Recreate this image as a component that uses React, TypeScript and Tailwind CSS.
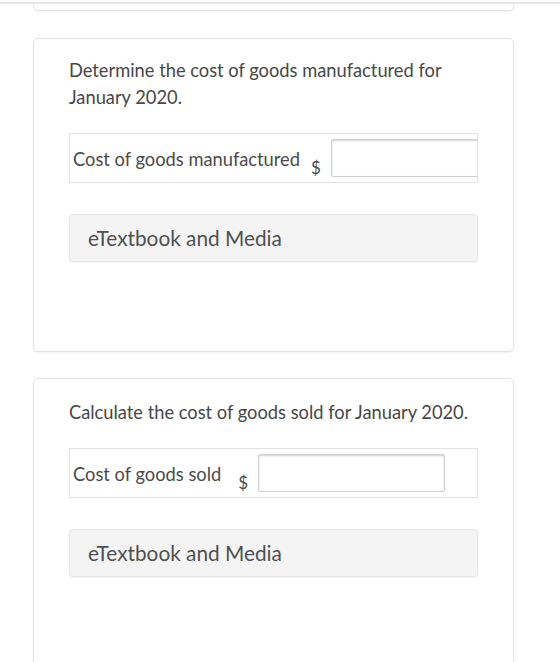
const font = { fontFamily: "Lato, 'Open Sans', sans-serif" };

type RowProps = {
  label: string;
  labelGap: string;
};

function AnswerRow({ label, labelGap }: RowProps) {
  return (
    <div className="flex h-[50px] items-start overflow-hidden border border-[#e2e2e2] bg-white">
      <span className="shrink-0 whitespace-nowrap pl-[3px] pt-[15px] text-[18.3px] leading-[20px] text-[#4a4a4a]">
        {label}
      </span>
      <span className={`${labelGap} shrink-0 pt-[24px] text-[17px] leading-[20px] text-[#4a4a4a]`}>$</span>
      <div className="ml-[10px] mt-[5px] h-[38px] w-[187px] shrink-0 rounded-[2px] border border-[#d0d0d0] bg-white shadow-[inset_0_1px_2px_rgba(0,0,0,0.18)]" />
    </div>
  );
}

function MediaButton() {
  return (
    <div className="flex h-[48px] items-center rounded-[4px] border border-[#e6e6e6] bg-[#f4f4f4] pl-[18px] text-[20.8px] text-[#505050] shadow-[0_1px_1px_rgba(0,0,0,0.05)]">
      eTextbook and Media
    </div>
  );
}

export default function App() {
  return (
    <div className="min-h-[662px] w-full bg-white pt-[2px]" style={font}>
      <div className="h-[2px] w-full bg-[#e6e6e6]" />
      <div className="ml-[33px] h-[7px] w-[481px] rounded-b-[5px] border-x border-b border-[#e2e2e2] shadow-[0_1px_2px_rgba(0,0,0,0.05)]" />

      <section className="ml-[33px] mt-[27px] h-[314px] w-[481px] rounded-[5px] border border-[#e2e2e2] px-[35px] pt-[18px] shadow-[0_1px_2px_rgba(0,0,0,0.06)]">
        <p className="text-[18.3px] leading-[27px] text-[#474747]">
          Determine the cost of goods manufactured for
          <br />
          January 2020.
        </p>
        <div className="mt-[22px]">
          <AnswerRow label="Cost of goods manufactured" labelGap="ml-[11px]" />
        </div>
        <div className="mt-[31px]">
          <MediaButton />
        </div>
      </section>

      <section className="ml-[33px] mt-[26px] h-[300px] w-[481px] rounded-t-[5px] border border-[#e2e2e2] px-[35px] pt-[20px] shadow-[0_1px_2px_rgba(0,0,0,0.06)]">
        <p className="text-[18.3px] leading-[27px] text-[#474747]">
          Calculate the cost of goods sold for January 2020.
        </p>
        <div className="mt-[22px]">
          <AnswerRow label="Cost of goods sold" labelGap="ml-[17px]" />
        </div>
        <div className="mt-[31px]">
          <MediaButton />
        </div>
      </section>
    </div>
  );
}
